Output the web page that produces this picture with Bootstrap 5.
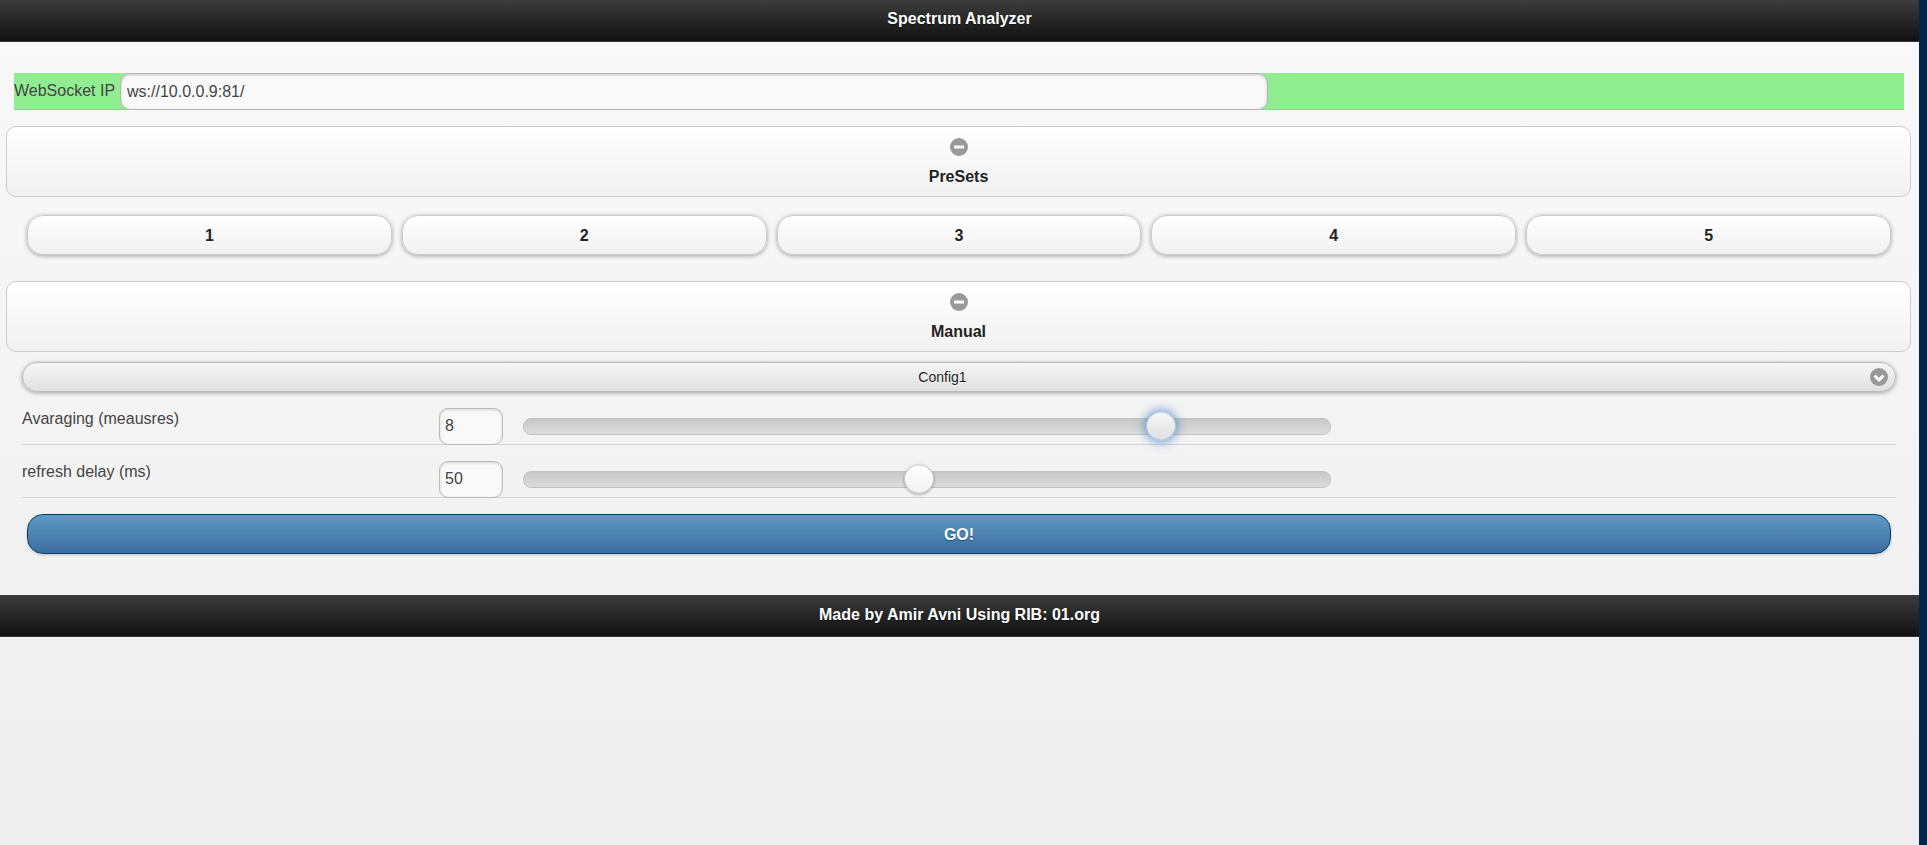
<!DOCTYPE html>
<html lang="en">
<head>
<meta charset="utf-8">
<title>Spectrum Analyzer</title>
<link href="https://cdn.jsdelivr.net/npm/bootstrap@5.3.0/dist/css/bootstrap.min.css" rel="stylesheet">
<style>
html,body{height:100%}
body{background:#04254a;font-family:"Liberation Sans",Arial,sans-serif;font-size:16px;color:#444;overflow:hidden}
.shell{width:1919px;min-height:845px;background:linear-gradient(#f9f9f9,#eeeeee)}
.barx{height:42px;background:linear-gradient(#3c3c3c,#111);border-bottom:1px solid #333;color:#fff;font-weight:700;text-shadow:0 1px 1px #111;line-height:38px;text-align:center;box-sizing:border-box}
.foot{margin-top:41px;height:42px;line-height:40px}
.wsbar{margin:31px 15px 0 14px;height:37px;background:#90ee90;border-bottom:1px solid #84dc84}
.wslabel{width:106px;line-height:36px;white-space:nowrap;flex:none}
.wsinput.form-control{width:1148px;height:37px;flex:none;background:#f9f9f9;border:1px solid #b5b5b5;border-radius:10px;padding:0 6px;font-size:16px;color:#444;box-shadow:inset 0 1px 3px rgba(0,0,0,.2)}
.collapsehead{margin:16px 8px 0 6px;height:71px;border:1px solid #ccc;border-radius:10px;background:linear-gradient(#fff,#f1f1f1);text-align:center;font-weight:700;color:#222;text-shadow:0 1px 0 #fff;padding-top:11px}
.collapsehead svg{display:block;margin:0 auto 11px}
.collapsehead .ttl{line-height:20px;display:block}
.presets{margin:18px 28px 0 27px;gap:10px}
.presetbtn.btn{flex:1 1 0;height:40px;padding:2px 0 0;border:1px solid #ccc;border-radius:16px;background:linear-gradient(#fff,#f1f1f1);color:#222;font-weight:700;font-size:16px;text-shadow:0 1px 0 #fff;box-shadow:0 1px 4px rgba(0,0,0,.35)}
.mt26{margin-top:26px}
.selectbtn.btn{display:flex;align-items:center;margin:10px 23px 0 22px;width:1874px;height:30px;padding:0 7px 0 0;border:1px solid #bbb;border-radius:15px;background:linear-gradient(#f6f6f6,#e0e0e0);color:#222;font-size:14px;text-shadow:0 1px 0 #fff;box-shadow:0 1px 4px rgba(0,0,0,.35)}
.selectbtn .seltext{flex:1 1 auto;text-align:center;margin-right:8px}
.fieldrow{margin:16px 23px 0 22px;height:37px;border-bottom:1px solid #d4d4d4}
.fieldlabel{width:417px;line-height:22px;flex:none}
.numinput.form-control{width:64px;height:37px;flex:none;background:#f9f9f9;border:1px solid #bbb;border-radius:9px;padding:0 5px 2px;font-size:16px;color:#444;box-shadow:inset 0 1px 3px rgba(0,0,0,.15)}
.track{width:808px;height:17px;margin:10px 0 0 20px;flex:none;border:1px solid #c2c2c2;border-radius:8px;background:linear-gradient(#c8c8c8,#dcdcdc)}
.thumbx{position:absolute;top:calc(50% - 1px);width:30px;height:29px;transform:translate(-50%,-50%);border:1px solid #ccc;border-radius:50%;background:linear-gradient(#fff,#f1f1f1);box-shadow:0 1px 3px rgba(0,0,0,.35)}
.thumbx.active-thumb{background:linear-gradient(#f6f6f6,#e0e0e0);border-color:#a9c3dc;box-shadow:0 0 12px #387bbe}
.gobtn.btn{display:block;margin:16px 28px 0 27px;width:1864px;height:40px;padding:2px 0 0;border:1px solid #044062;border-radius:16px;background:linear-gradient(#5f99c5,#3d6d9f);color:#fff;font-weight:700;font-size:16px;text-shadow:0 1px 1px #145072;box-shadow:0 1px 3px rgba(0,0,0,.2)}
</style>
</head>
<body>
<div class="shell">
  <header class="barx">Spectrum Analyzer</header>

  <div class="wsbar d-flex align-items-start">
    <label class="wslabel" for="ws">WebSocket IP</label>
    <input id="ws" class="wsinput form-control" type="text" value="ws://10.0.0.9:81/">
  </div>

  <div class="collapsehead">
    <svg width="18" height="18" viewBox="0 0 18 18" aria-hidden="true"><circle cx="9" cy="9" r="9" fill="#999"/><rect x="4" y="7.5" width="10" height="3" fill="#fff"/></svg>
    <span class="ttl">PreSets</span>
  </div>

  <div class="presets d-flex">
    <button type="button" class="presetbtn btn">1</button>
    <button type="button" class="presetbtn btn">2</button>
    <button type="button" class="presetbtn btn">3</button>
    <button type="button" class="presetbtn btn">4</button>
    <button type="button" class="presetbtn btn">5</button>
  </div>

  <div class="collapsehead mt26">
    <svg width="18" height="18" viewBox="0 0 18 18" aria-hidden="true"><circle cx="9" cy="9" r="9" fill="#999"/><rect x="4" y="7.5" width="10" height="3" fill="#fff"/></svg>
    <span class="ttl">Manual</span>
  </div>

  <button type="button" class="selectbtn btn">
    <span class="seltext">Config1</span>
    <svg width="18" height="18" viewBox="0 0 18 18" aria-hidden="true"><circle cx="9" cy="9" r="9" fill="#999"/><path d="M4.6 7.6 9 12 13.4 7.6" fill="none" stroke="#fff" stroke-width="3"/></svg>
  </button>

  <div class="fieldrow d-flex align-items-start">
    <label class="fieldlabel" for="avg">Avaraging (meausres)</label>
    <input id="avg" class="numinput form-control" type="text" value="8">
    <div class="track position-relative"><span class="thumbx active-thumb" style="left:79%"></span></div>
  </div>
  <div class="fieldrow d-flex align-items-start">
    <label class="fieldlabel" for="dly">refresh delay (ms)</label>
    <input id="dly" class="numinput form-control" type="text" value="50">
    <div class="track position-relative"><span class="thumbx" style="left:49%"></span></div>
  </div>

  <button type="button" class="gobtn btn">GO!</button>

  <footer class="barx foot">Made by Amir Avni Using RIB: 01.org</footer>
</div>
<script src="https://cdn.jsdelivr.net/npm/bootstrap@5.3.0/dist/js/bootstrap.bundle.min.js"></script>
</body>
</html>
